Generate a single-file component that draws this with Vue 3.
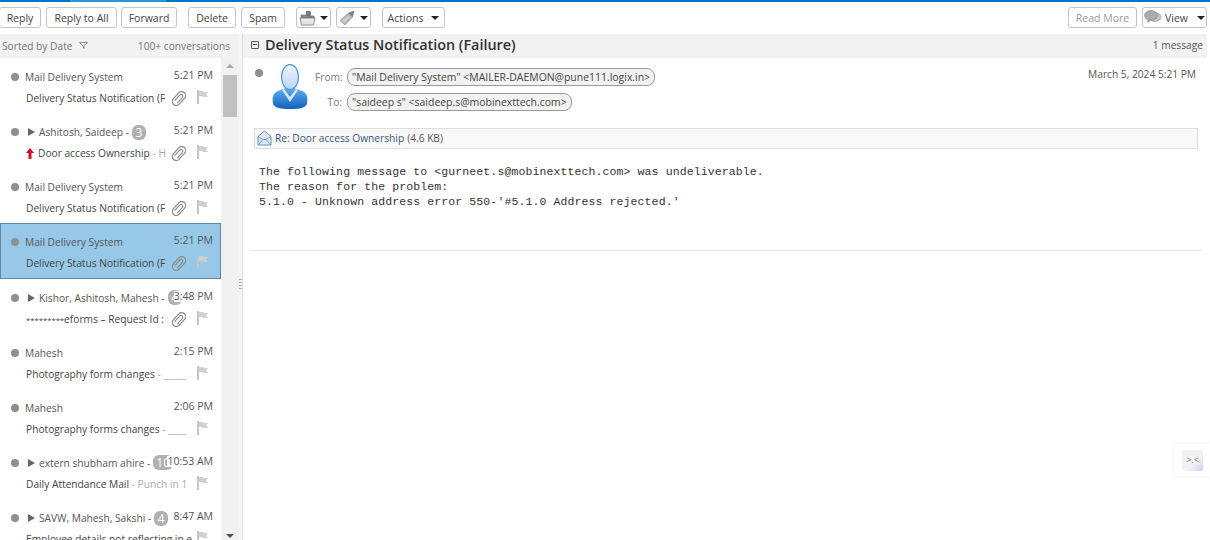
<script setup>
const conversations = [
  { id: 1, sender: 'Mail Delivery System', time: '5:21 PM', subject: 'Delivery Status Notification (F', clip: true },
  { id: 2, sender: 'Ashitosh, Saideep -', count: '3', time: '5:21 PM', subject: 'Door access Ownership', preview: ' - H', clip: true, important: true },
  { id: 3, sender: 'Mail Delivery System', time: '5:21 PM', subject: 'Delivery Status Notification (F', clip: true },
  { id: 4, sender: 'Mail Delivery System', time: '5:21 PM', subject: 'Delivery Status Notification (F', clip: true, selected: true },
  { id: 5, sender: 'Kishor, Ashitosh, Mahesh -', count: '4', time: '3:48 PM', stars: '*********', subject: 'eforms – Request Id :', clip: true },
  { id: 6, sender: 'Mahesh', time: '2:15 PM', subject: 'Photography form changes', preview: ' - _____' },
  { id: 7, sender: 'Mahesh', time: '2:06 PM', subject: 'Photography forms changes', preview: ' - ____' },
  { id: 8, sender: 'extern shubham ahire -', count: '10', time: '10:53 AM', subject: 'Daily Attendance Mail', preview: ' - Punch in 1' },
  { id: 9, sender: 'SAVW, Mahesh, Sakshi -', count: '4', time: '8:47 AM', subject: 'Employee details not reflecting in e' },
]
</script>

<template>
  <div class="app">
    <div class="topline"><span class="topline-light"></span></div>

    <div class="toolbar">
      <button class="btn b-reply">Reply</button>
      <button class="btn b-all">Reply to All</button>
      <button class="btn b-forward">Forward</button>
      <button class="btn b-delete">Delete</button>
      <button class="btn b-spam">Spam</button>
      <button class="btn b-icon b-print">
        <svg width="17" height="16" viewBox="0 0 17 16">
          <path d="M7 6V1h4l1 1v4z" fill="#7d7d7d" />
          <path d="M2 5h5l1 1h7v2H2z" fill="#8c8c8c" stroke="#666" stroke-width=".6" />
          <path d="M1 8h15l-1.500 7h-12z" fill="#e4e4e4" stroke="#777" stroke-width=".8" />
          <path d="M3 10h11" stroke="#f7f7f7" />
        </svg>
        <i class="caret"></i>
      </button>
      <button class="btn b-icon b-tag">
        <svg width="17" height="16" viewBox="0 0 17 16">
          <path d="M1 10.500 9.500 3 15 1l-1.500 6L6 15z" fill="#b5b5b5" stroke="#8a8a8a" stroke-width=".6" />
          <path d="M9.500 3 15 1l-1.500 6-2-2z" fill="#7e7e7e" />
          <path d="M3 10.500 9 5.500l2 2-6 5.500z" fill="#cdcdcd" />
        </svg>
        <i class="caret"></i>
      </button>
      <button class="btn b-actions">Actions <i class="caret"></i></button>
      <div class="toolbar-right">
        <button class="btn b-more">Read More</button>
        <button class="btn b-view">
          <svg width="18" height="15" viewBox="0 0 18 15">
            <ellipse cx="11" cy="7" rx="6" ry="4.500" fill="#c4c4c4" stroke="#999" stroke-width=".6" />
            <ellipse cx="7" cy="5.500" rx="6.500" ry="5" fill="#aaa" stroke="#8a8a8a" stroke-width=".6" />
            <path d="M4 9l-1 4 5-3z" fill="#999" />
          </svg>
          View <i class="caret"></i>
        </button>
      </div>
    </div>

    <div class="main">
      <aside class="list-pane">
        <div class="list-head">
          <span class="sorted">Sorted by Date
            <svg class="sort-icon" width="9" height="7" viewBox="0 0 9 7"><path d="M.5.5h8L5 3.500v3L4 4z" fill="none" stroke="#777" stroke-width=".8" /></svg>
          </span>
          <span>100+ conversations</span>
        </div>
        <div class="list-body">
          <div class="rows">
            <div
              v-for="item in conversations"
              :key="item.id"
              class="row"
              :class="{ selected: item.selected }"
            >
              <div class="row-top">
                <span class="dot"></span>
                <i v-if="item.count" class="thread-arrow"></i>
                <span class="sender">{{ item.sender }}</span>
                <span v-if="item.count" class="count">{{ item.count }}</span>
              </div>
              <span class="time">{{ item.time }}</span>
              <div class="row-bottom">
                <svg v-if="item.important" class="up" width="8" height="11" viewBox="0 0 8 11"><path d="M4 0 8 5H5.500v6h-3V5H0z" fill="#c8102e" /></svg>
                <span class="subject" :class="{ wide: !item.clip }"><span v-if="item.stars" class="stars">{{ item.stars }}</span>{{ item.subject }}<span class="preview">{{ item.preview }}</span></span>
                <svg v-if="item.clip" class="clip" width="14" height="15" viewBox="0 0 14 15">
                  <g transform="rotate(42 7 7.500)" fill="none" stroke="#8a8a8a">
                    <rect x="3" y="-.5" width="8" height="16" rx="4" stroke-width="1.200" />
                    <path d="M5.200 12V4.500a1.800 1.800 0 0 1 3.600 0V12" stroke-width="1.100" />
                  </g>
                </svg>
                <svg class="flag" width="11" height="14" viewBox="0 0 11 14">
                  <path d="M0 0h2v14H0z" fill="#c4c4c4" />
                  <path d="M2 1h4l1 1h4L9 4.500 11 7H6L5 6H2z" fill="#d0d0d0" />
                </svg>
              </div>
            </div>
          </div>
          <div class="scrollbar">
            <i class="arrow-up"></i>
            <div class="thumb"></div>
            <i class="arrow-down"></i>
          </div>
        </div>
      </aside>

      <div class="sash"><span class="grip"></span></div>

      <section class="reader">
        <div class="reader-head">
          <span class="collapse"></span>
          <h1>Delivery Status Notification (Failure)</h1>
          <span class="msg-count">1 message</span>
        </div>

        <div class="message-head">
          <span class="dot msg-dot"></span>
          <svg class="avatar" width="36" height="46" viewBox="0 0 36 46">
            <defs>
              <linearGradient id="body" x1="0" y1="0" x2="0" y2="1">
                <stop offset="0" stop-color="#62aef0" />
                <stop offset="1" stop-color="#0f62bb" />
              </linearGradient>
              <linearGradient id="head" x1="0" y1="0" x2="0" y2="1">
                <stop offset="0" stop-color="#f2f7fc" />
                <stop offset="1" stop-color="#b8d6f2" />
              </linearGradient>
            </defs>
            <path d="M1 40c-1-7 0-11 5-13l8-3h8l8 3c5 2 6 6 5 13-2 4-7 5-17 5S3 44 1 40z" fill="url(#body)" />
            <path d="M12 25l6 8 6-8 2 1-8 12-8-12z" fill="#d5e7f7" />
            <ellipse cx="18" cy="13" rx="8.500" ry="12.500" fill="url(#head)" stroke="#4f97dc" stroke-width="1.300" />
          </svg>
          <div class="addresses">
            <div class="addr"><span class="addr-label">From:</span><span class="pill">"Mail Delivery System" &lt;MAILER-DAEMON@pune111.logix.in&gt;</span></div>
            <div class="addr"><span class="addr-label">To:</span><span class="pill">"saideep s" &lt;saideep.s@mobinexttech.com&gt;</span></div>
          </div>
          <span class="msg-date">March 5, 2024 5:21 PM</span>
        </div>

        <div class="attachment">
          <svg width="15" height="16" viewBox="0 0 15 16">
            <path d="M1 6.500 7.500 1 14 6.500V15H1z" fill="#dbe8f5" stroke="#6f93b8" />
            <path d="M1 15l5-5.500h3l5 5.500M1 6.500l5 3M14 6.500l-5 3" fill="none" stroke="#6f93b8" stroke-width=".8" />
          </svg>
          <span class="att-name">Re: Door access Ownership</span>
          <span class="att-size">(4.6 KB)</span>
        </div>

        <pre class="body-text">The following message to &lt;gurneet.s@mobinexttech.com&gt; was undeliverable.
The reason for the problem:
5.1.0 - Unknown address error 550-'#5.1.0 Address rejected.'</pre>
        <div class="rule"></div>
      </section>
    </div>

    <div class="widget">
      <div class="widget-face">&gt;.&lt;</div>
    </div>
  </div>
</template>

<style>
html, body { margin: 0; overflow: hidden; background: #fff; }
</style>

<style scoped>
.app {
  position: relative;
  width: 1210px;
  height: 540px;
  overflow: hidden;
  background: #fff;
  color: #333;
  font-family: "Open Sans", "Noto Sans", sans-serif;
  font-size: 10.2px;
  display: flex;
  flex-direction: column;
}
.topline {
  height: 2px;
  background: #0072c6;
  flex: none;
}
.topline-light {
  display: block;
  width: 96px;
  height: 2px;
  margin-left: 70px;
  background: #3194d2;
}
.toolbar {
  height: 32px;
  flex: none;
  display: flex;
  align-items: flex-start;
  padding-top: 5px;
  box-sizing: border-box;
  margin-left: -1px;
  font-size: 10.5px;
}
.toolbar-right {
  margin-left: auto;
  margin-right: 3px;
  display: flex;
  gap: 5px;
}
.btn {
  height: 21px;
  box-sizing: border-box;
  padding: 0;
  background: #fff;
  border: 1px solid #c4c4c4;
  border-radius: 3px;
  color: #444;
  font: inherit;
  line-height: 18px;
  display: inline-flex;
  align-items: center;
  justify-content: center;
  gap: 5px;
}
.b-reply { width: 42px; margin-right: 5px; }
.b-all { width: 71px; margin-right: 4px; }
.b-forward { width: 56px; margin-right: 11px; }
.b-delete { width: 48px; margin-right: 5px; }
.b-spam { width: 44px; margin-right: 11px; }
.b-icon { width: 35px; gap: 4px; }
.b-print { margin-right: 5px; }
.b-tag { margin-right: 11px; }
.b-actions { width: 63px; gap: 8px; }
.b-more { width: 69px; color: #9a9a9a; }
.b-view { width: 65px; gap: 3px; }
.b-view .caret { margin-left: 6px; }
.caret {
  display: inline-block;
  width: 0;
  height: 0;
  border-left: 4px solid transparent;
  border-right: 4px solid transparent;
  border-top: 4px solid #222;
}
.main {
  flex: 1;
  min-height: 0;
  display: flex;
}
.list-pane {
  width: 239px;
  flex: none;
  display: flex;
  flex-direction: column;
}
.list-head {
  height: 24px;
  flex: none;
  background: #f2f2f2;
  display: flex;
  justify-content: space-between;
  align-items: center;
  padding: 0 9px 0 2px;
  color: #777;
}
.sort-icon { margin-left: 4px; vertical-align: 1px; }
.list-body {
  flex: 1;
  min-height: 0;
  display: flex;
}
.rows {
  width: 221px;
  flex: none;
}
.row {
  position: relative;
  height: 55.125px;
  box-sizing: border-box;
  padding-top: 11px;
}
.row.selected {
  background: #97c8e8;
  border: 1px solid #5f87a8;
  padding-top: 10px;
}
.row.selected .row-top { margin-left: -1px; }
.row.selected .row-bottom { margin-left: -1px; }
.row.selected .time { top: 11px; right: 7px; background: transparent; }
.row-top {
  height: 16px;
  display: flex;
  align-items: center;
  padding-left: 11px;
  color: #555;
  white-space: nowrap;
}
.dot {
  width: 8px;
  height: 8px;
  border-radius: 50%;
  background: #8f8f8f;
  flex: none;
}
.thread-arrow {
  width: 0;
  height: 0;
  border-top: 4px solid transparent;
  border-bottom: 4px solid transparent;
  border-left: 7px solid #666;
  margin-left: 9px;
  margin-right: -2px;
}
.sender { margin-left: 6px; }
.count {
  flex: none;
  min-width: 8px;
  height: 15px;
  padding: 0 3px;
  margin-left: 3px;
  border-radius: 6px;
  background: #b0b0b0;
  color: #fff;
  font-size: 12px;
  line-height: 15px;
  text-align: center;
}
.time {
  position: absolute;
  top: 12px;
  right: 8px;
  color: #555;
  background: #fff;
  font-size: 10.5px;
  line-height: 11px;
}
.row-bottom {
  position: relative;
  height: 16px;
  margin-top: 5px;
  padding-left: 26px;
  display: flex;
  align-items: center;
  color: #444;
}
.up { flex: none; margin-right: 4px; }
.subject {
  display: block;
  max-width: 141px;
  overflow: hidden;
  white-space: pre;
}
.subject.wide { max-width: 166px; }
.up + .subject { max-width: 128px; }
.stars { font-size: 7.700px; }
.preview { color: #aaa; }
.clip { position: absolute; left: 172px; top: 1px; }
.flag { position: absolute; left: 197px; top: 0; }
.scrollbar {
  width: 18px;
  background: #f1f1f1;
  position: relative;
  display: flex;
  flex-direction: column;
  align-items: center;
}
.thumb {
  width: 14px;
  height: 42px;
  background: #c1c1c1;
  position: absolute;
  top: 17px;
}
.arrow-up, .arrow-down {
  position: absolute;
  width: 0;
  height: 0;
  border-left: 4px solid transparent;
  border-right: 4px solid transparent;
}
.arrow-up { top: 6px; border-bottom: 4px solid #a6a6a6; }
.arrow-down { bottom: 2px; border-top: 4px solid #505050; }
.sash {
  width: 4px;
  flex: none;
  background: #f5f5f5;
  border-right: 1px solid #ddd;
  box-sizing: border-box;
  display: flex;
  align-items: center;
}
.grip {
  display: block;
  width: 3px;
  height: 12px;
  margin-top: -5px;
  background: repeating-linear-gradient(#a8a8a8 0 1px, transparent 1px 3px);
}
.reader {
  flex: 1;
  min-width: 0;
  display: flex;
  flex-direction: column;
}
.reader-head {
  height: 24px;
  flex: none;
  width: 964px;
  box-sizing: border-box;
  background: #f2f2f2;
  display: flex;
  align-items: center;
  padding: 0 4px 3px 8px;
}
.collapse {
  position: relative;
  width: 6px;
  height: 6px;
  border: 1px solid #555;
  border-radius: 1px;
  margin-right: 6px;
}
.collapse::after {
  content: "";
  position: absolute;
  left: 1px;
  top: 2.500px;
  width: 4px;
  height: 1px;
  background: #555;
}
h1 {
  margin: 0;
  font-size: 14.4px;
  font-weight: 600;
  color: #333;
  flex: 1;
}
.msg-count { color: #555; }
.message-head {
  height: 70px;
  flex: none;
  display: flex;
  align-items: flex-start;
  padding-left: 12px;
  box-sizing: border-box;
}
.msg-dot { margin-top: 11px; }
.avatar { margin: 6px 7px 0 9px; }
.addresses { padding-top: 10px; }
.addr {
  display: flex;
  align-items: center;
  height: 18px;
  margin-bottom: 7px;
}
.addr-label {
  width: 27px;
  margin-right: 5px;
  text-align: right;
  color: #777;
}
.pill {
  height: 18px;
  box-sizing: border-box;
  padding: 0 4px;
  border: 1px solid #9a9a9a;
  border-radius: 8px;
  background: #f2f2f2;
  font-size: 10.45px;
  line-height: 16px;
  color: #444;
  white-space: nowrap;
}
.msg-date {
  margin-left: auto;
  margin-right: 14px;
  margin-top: 9px;
  color: #555;
}
.attachment {
  width: 944px;
  height: 21px;
  flex: none;
  box-sizing: border-box;
  margin-left: 11px;
  padding: 0 0 1px 2px;
  display: flex;
  align-items: center;
  gap: 3px;
  background: #f9f9f9;
  border: 1px solid #ddd;
}
.att-name { color: #36587c; }
.att-size { color: #555; }
.body-text {
  margin: 15px 0 0 16px;
  font-family: "Liberation Mono", monospace;
  font-size: 11.5px;
  letter-spacing: .11px;
  line-height: 15px;
  color: #333;
}
.rule {
  width: 952px;
  height: 1px;
  margin: 41px 0 0 7px;
  background: #e6e6e6;
}
.widget {
  position: absolute;
  left: 1174px;
  top: 444px;
  width: 36px;
  height: 32px;
  background: #fff;
  border-radius: 5px 0 0 5px;
  box-shadow: 0 0 4px rgba(0,0,0,0.08);
  display: flex;
  align-items: center;
  padding-left: 8px;
  box-sizing: border-box;
}
.widget-face {
  width: 21px;
  height: 21px;
  border-radius: 3px;
  background: linear-gradient(135deg, #f2f2f4 60%, #dcc8f0);
  color: #777;
  font-size: 9px;
  line-height: 20px;
  text-align: center;
}
</style>
